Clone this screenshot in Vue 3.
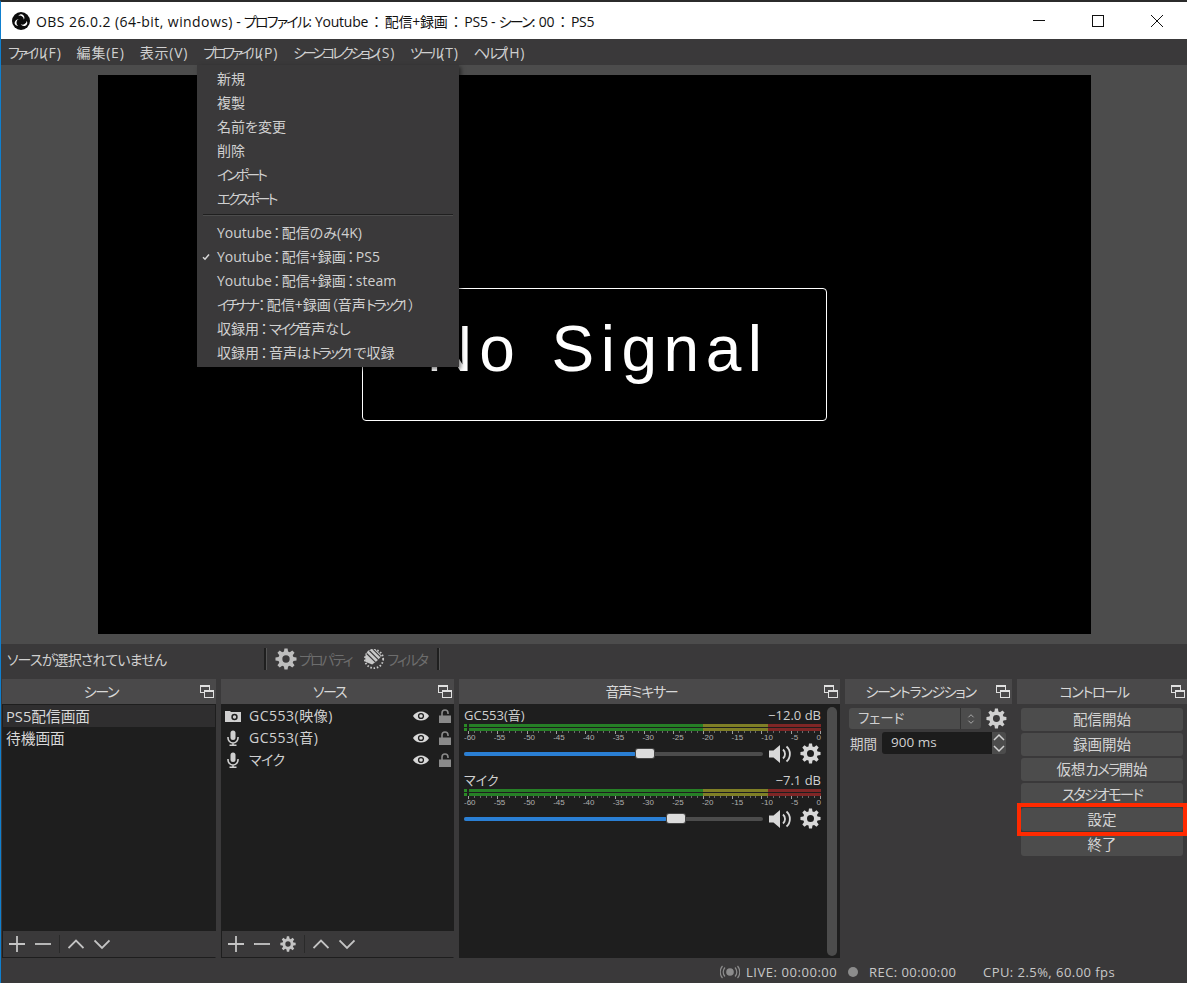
<template>
  <div class="window">
    <header class="titlebar">
      <svg class="logo" viewBox="0 0 20 20">
        <circle cx="10" cy="10" r="10" fill="#0c0c0c" />
        <g v-for="r in [0, 120, 240]" :key="r" :transform="`rotate(${r} 10 10)`">
          <path d="M7 4.600a3.300 3.300 0 0 1 5.600-1.100a4.300 4.300 0 0 1 .4 5.200a3.700 3.700 0 0 0-2-3.900a3.600 3.600 0 0 0-4 -.2z" fill="#fff" />
        </g>
      </svg>
      <span class="title-text">
        <span class="title-prefix">OBS 26.0.2 (64-bit, windows)</span>
        <span v-for="(s, i) in split(titleText)" :key="i" :class="s.cls">{{ s.t }}</span>
      </span>
      <div class="window-buttons">
        <svg viewBox="0 0 12 12"><path d="M0 5.500h12" /></svg>
        <svg viewBox="0 0 12 12"><rect x="0.500" y="0.500" width="11" height="11" /></svg>
        <svg viewBox="0 0 12 12"><path d="M0 0l12 12M12 0L0 12" /></svg>
      </div>
    </header>

    <nav class="menubar">
      <span v-for="m in menus" :key="m">
        <span v-for="(s, i) in split(m)" :key="i" :class="s.cls">{{ s.t }}</span>
      </span>
      <div class="dropdown">
        <div v-for="item in profileTop" :key="item" class="dd-item">
          <span v-for="(s, i) in split(item)" :key="i" :class="s.cls">{{ s.t }}</span>
        </div>
        <div class="dd-sep"></div>
        <div v-for="item in profiles" :key="item.label" class="dd-item">
          <svg v-if="item.checked" class="dd-check" viewBox="0 0 8 8"><path d="M1 4.200l2 2L7 1.500" /></svg>
          <span v-for="(s, i) in split(item.label)" :key="i" :class="s.cls">{{ s.t }}</span>
        </div>
      </div>
    </nav>

    <main class="preview-wrap">
      <div class="preview">
        <div class="no-signal"><span>No Signal</span></div>
      </div>
    </main>

    <div class="context-bar">
      <span class="context-label">ソースが選択されていません</span>
      <i class="ctx-sep"></i>
      <svg class="ctx-icon" viewBox="0 0 24 24"><path :d="gearPath" fill-rule="evenodd" fill="#bdbdbd" /></svg>
      <span class="ctx-disabled">プロパティ</span>
      <svg class="ctx-icon filter" viewBox="0 0 24 24">
        <circle cx="12" cy="12" r="10" fill="none" stroke="#c8c8c8" stroke-width="2" stroke-dasharray="1.700 1.900" />
        <path d="M2.500 9a9 9 0 0 1 11-7.500l7 7-5 5.500-5.500 4-7.500-3z" fill="#c8c8c8" />
        <path d="M7 3l10 10M4 6l9.500 9.500M11 1.500l8 8" stroke="#3a393a" stroke-width="1.200" />
      </svg>
      <span class="ctx-disabled">フィルタ</span>
      <i class="ctx-sep last"></i>
    </div>

    <section class="docks">
      <div class="dock">
        <div class="dock-head"><span>シーン</span><i class="float-icon"></i></div>
        <div class="dock-list">
          <div v-for="(s, i) in scenes" :key="s" class="scene-row" :class="{ selected: i === 0 }">{{ s }}</div>
        </div>
        <div class="toolbar">
          <svg viewBox="0 0 16 16"><path d="M8 0v16M0 8h16" /></svg>
          <svg viewBox="0 0 16 16"><path d="M0 8h16" /></svg>
          <i class="tool-sep"></i>
          <svg viewBox="0 0 16 16"><path d="M0.500 12L8 4.500l7.500 7.500" /></svg>
          <svg viewBox="0 0 16 16"><path d="M0.500 4.500L8 12l7.500-7.500" /></svg>
        </div>
      </div>

      <div class="dock">
        <div class="dock-head"><span>ソース</span><i class="float-icon"></i></div>
        <div class="dock-list source-list">
          <div v-for="s in sources" :key="s.name" class="source-row">
            <svg v-if="s.type === 'camera'" class="src-icon" viewBox="0 0 16 14">
              <path d="M0 2h5l1 1h10v10H0z" fill="#d0d0d0" />
              <circle cx="9.500" cy="8" r="3.200" fill="#1e1e1e" />
              <circle cx="9.500" cy="8" r="1.700" fill="#d0d0d0" />
            </svg>
            <svg v-else class="src-icon" viewBox="0 0 16 16">
              <rect x="5.500" y="0.500" width="5" height="9.500" rx="2.500" fill="#d0d0d0" />
              <path d="M3 7v1a5 5 0 0 0 10 0V7M8 13v2.200M4.500 15.300h7" fill="none" stroke="#d0d0d0" stroke-width="1.600" />
            </svg>
            <span class="src-name">
              <span v-for="(p, i) in split(s.name)" :key="i" :class="p.cls">{{ p.t }}</span>
            </span>
            <svg class="eye" viewBox="0 0 16 10">
              <path d="M0 5c3.500-6 12.500-6 16 0-3.500 6-12.500 6-16 0z" fill="#d8d8d8" />
              <circle cx="8" cy="5" r="3.100" fill="#1e1e1e" />
              <circle cx="8" cy="5" r="1.800" fill="#d8d8d8" />
            </svg>
            <svg class="lock" viewBox="0 0 12 14">
              <path d="M3 7V4a3 3 0 0 1 6 0v1" fill="none" stroke="#8a8a8a" stroke-width="1.600" />
              <rect x="0" y="6.500" width="12" height="7.500" fill="#8a8a8a" />
            </svg>
          </div>
        </div>
        <div class="toolbar">
          <svg viewBox="0 0 16 16"><path d="M8 0v16M0 8h16" /></svg>
          <svg viewBox="0 0 16 16"><path d="M0 8h16" /></svg>
          <svg viewBox="0 0 24 24" class="tool-gear"><path :d="gearPath" fill-rule="evenodd" /></svg>
          <i class="tool-sep"></i>
          <svg viewBox="0 0 16 16"><path d="M0.500 12L8 4.500l7.500 7.500" /></svg>
          <svg viewBox="0 0 16 16"><path d="M0.500 4.500L8 12l7.500-7.500" /></svg>
        </div>
      </div>

      <div class="dock">
        <div class="dock-head"><span>音声ミキサー</span><i class="float-icon"></i></div>
        <div class="mixer-body">
          <div class="mixer-channels">
            <div v-for="ch in channels" :key="ch.name" class="channel">
              <div class="ch-top"><span>{{ ch.name }}</span><span>{{ ch.level }}</span></div>
              <div class="meter">
                <div class="clip"><i></i><i></i></div>
                <div class="meter-bars"><i></i><i></i></div>
              </div>
              <div class="ticks"></div>
              <div class="tick-labels"><span v-for="t in tickLabels" :key="t">{{ t }}</span></div>
              <div class="ch-controls">
                <div class="slider">
                  <div class="slider-fill" :style="{ width: ch.volume + 'px' }"></div>
                </div>
                <svg class="speaker" viewBox="0 0 22 20">
                  <path d="M0 6.500h4.500L11 1v18l-6.500-5.500H0z" fill="#d8d8d8" />
                  <path d="M14 5.500a6 6 0 0 1 0 9M17.500 2.500a10 10 0 0 1 0 15" fill="none" stroke="#d8d8d8" stroke-width="1.800" />
                </svg>
                <svg class="mix-gear" viewBox="0 0 24 24"><path :d="gearPath" fill-rule="evenodd" fill="#d8d8d8" /></svg>
              </div>
            </div>
          </div>
          <div class="scrollbar"></div>
        </div>
      </div>

      <div class="dock plain">
        <div class="dock-head"><span>シーントランジション</span><i class="float-icon"></i></div>
        <div class="transition-body">
          <div class="combo-row">
            <div class="combo">
              <span class="combo-text">フェード</span>
              <svg class="combo-arrows" viewBox="0 0 8 14"><path d="M1 5l3-3 3 3M1 9l3 3 3-3" /></svg>
            </div>
            <svg class="trans-gear" viewBox="0 0 24 24"><path :d="gearPath" fill-rule="evenodd" fill="#d0d0d0" /></svg>
          </div>
          <div class="duration-row">
            <span>期間</span>
            <div class="spin-input">900 ms</div>
            <svg class="spin-arrows" viewBox="0 0 14 22"><path d="M2 8l5-5 5 5M2 14l5 5 5-5" /></svg>
          </div>
        </div>
      </div>

      <div class="dock plain">
        <div class="dock-head"><span>コントロール</span><i class="float-icon"></i></div>
        <div class="control-body">
          <button v-for="b in controls" :key="b" class="ctl-btn">
            <span v-for="(s, i) in split(b)" :key="i" :class="s.cls">{{ s.t }}</span>
          </button>
          <div class="highlight"></div>
        </div>
      </div>
    </section>

    <footer class="statusbar">
      <svg class="live-icon" viewBox="0 0 20 14">
        <circle cx="10" cy="7" r="3.800" fill="#8c8c8c" />
        <path d="M5 2.500a6.500 6.500 0 0 0 0 9M15 2.500a6.500 6.500 0 0 1 0 9M2.500 1a9 9 0 0 0 0 12M17.500 1a9 9 0 0 1 0 12" fill="none" stroke="#8c8c8c" stroke-width="1.200" />
      </svg>
      <span class="st-live">LIVE: 00:00:00</span>
      <i class="rec-dot"></i>
      <span class="st-rec">REC: 00:00:00</span>
      <span class="st-cpu">CPU: 2.5%, 60.00 fps</span>
    </footer>
  </div>
</template>

<script setup>
const titleText = " - プロファイル: Youtube：配信+録画：PS5 - シーン: 00：PS5";
const menus = ["ファイル(F)", "編集(E)", "表示(V)", "プロファイル(P)", "シーンコレクション(S)", "ツール(T)", "ヘルプ(H)"];
const profileTop = ["新規", "複製", "名前を変更", "削除", "インポート", "エクスポート"];
const profiles = [
  { label: "Youtube：配信のみ(4K)" },
  { label: "Youtube：配信+録画：PS5", checked: true },
  { label: "Youtube：配信+録画：steam" },
  { label: "イチナナ：配信+録画（音声トラック1）" },
  { label: "収録用：マイク音声なし" },
  { label: "収録用：音声はトラック1で収録" },
];
const scenes = ["PS5配信画面", "待機画面"];
const sources = [
  { name: "GC553(映像)", type: "camera" },
  { name: "GC553(音)", type: "mic" },
  { name: "マイク", type: "mic" },
];
const channels = [
  { name: "GC553(音)", level: "−12.0 dB", volume: 172 },
  { name: "マイク", level: "−7.1 dB", volume: 203 },
];
const tickLabels = [-60, -55, -50, -45, -40, -35, -30, -25, -20, -15, -10, -5, 0];
const controls = ["配信開始", "録画開始", "仮想カメラ開始", "スタジオモード", "設定", "終了"];

// カタカナと全角コロンは元の画面だと字幅が違うので分けて詰める
const split = (text) =>
  text
    .split(/([ァ-ヶー]+|：)/)
    .filter(Boolean)
    .map((t) => ({ t, cls: t === "：" ? "colon" : /^[ァ-ヶー]/.test(t) ? "kana" : "" }));

// 8歯の歯車アイコンを計算で作る
const makeGear = () => {
  const pts = [];
  for (let i = 0; i < 8; i++) {
    const a = (i * Math.PI) / 4;
    const spots = [
      [-0.27, 8.4],
      [-0.15, 11.6],
      [0.15, 11.6],
      [0.27, 8.4],
    ];
    for (const [d, r] of spots) {
      pts.push(`${(12 + r * Math.sin(a + d)).toFixed(2)} ${(12 - r * Math.cos(a + d)).toFixed(2)}`);
    }
  }
  return `M${pts.join("L")}Z M12 8a4 4 0 1 0 0 8a4 4 0 1 0 0-8Z`;
};
const gearPath = makeGear();
</script>

<style>
html,
body {
  margin: 0;
  background: #3a393a;
}
</style>

<style scoped>
.window {
  width: 1187px;
  height: 983px;
  display: flex;
  flex-direction: column;
  overflow: hidden;
  background: #3a393a;
  color: #d0d0d0;
  font-family: "Open Sans", "Noto Sans CJK JP", sans-serif;
  font-size: 14px;
  font-feature-settings: "palt";
  box-sizing: border-box;
  border-top: 2px solid #2b2b2b;
  border-left: 1px solid #0f7fce;
}
.kana {
  letter-spacing: var(--kana, 0);
}
.colon {
  padding: 0 var(--colon, 0);
}

.titlebar {
  --kana: -1.800px;
  --colon: 5px;
  height: 37px;
  flex: none;
  display: flex;
  align-items: center;
  background: #fff;
  color: #111;
  font-size: 14px;
  padding-left: 11px;
}
.logo {
  width: 18px;
  height: 18px;
  margin-right: 6px;
}
.title-text {
  white-space: pre;
  letter-spacing: -0.25px;
}
.title-prefix {
  letter-spacing: 0.430px;
}
.window-buttons {
  margin-left: auto;
  display: flex;
  gap: 47px;
  padding-right: 24px;
}
.window-buttons svg {
  width: 12px;
  height: 12px;
  fill: none;
  stroke: #111;
  stroke-width: 1;
}

.menubar {
  --kana: -3.200px;
  height: 26px;
  flex: none;
  display: flex;
  align-items: center;
  gap: 15px;
  padding-left: 7px;
  position: relative;
  font-size: 14px;
  letter-spacing: 0.800px;
}
.dropdown {
  --kana: -3px;
  --colon: 1.500px;
  position: absolute;
  left: 196px;
  top: 26px;
  width: 262px;
  height: 302px;
  box-sizing: border-box;
  padding-top: 2px;
  background: #3a393a;
  box-shadow: 2px 2px 4px rgba(0, 0, 0, 0.5);
  z-index: 5;
  font-size: 14px;
  letter-spacing: 0;
}
.dd-item {
  position: relative;
  height: 24px;
  line-height: 24px;
  padding-left: 20px;
  white-space: nowrap;
}
.dd-check {
  position: absolute;
  left: 5px;
  top: 8px;
  width: 8px;
  height: 8px;
  fill: none;
  stroke: #d8d8d8;
  stroke-width: 1.500;
}
.dd-sep {
  height: 1px;
  margin: 3px 6px 5px 6px;
  background: #1f1f1f;
  border-bottom: 1px solid #4c4c4c;
}

.preview-wrap {
  height: 579px;
  flex: none;
  box-sizing: border-box;
  padding: 10px 96px 10px 97px;
  background: #4c4c4c;
}
.preview {
  width: 993px;
  height: 559px;
  background: #000;
  display: flex;
  align-items: center;
  justify-content: center;
}
.no-signal {
  width: 465px;
  height: 133px;
  box-sizing: border-box;
  border: 1.500px solid #fff;
  border-radius: 4px;
  padding: 0 0 12px 6px;
  display: flex;
  align-items: center;
  justify-content: center;
  color: #fff;
  font-family: "Liberation Sans", sans-serif;
  font-size: 64px;
  letter-spacing: 6.500px;
  word-spacing: 6px;
}

.context-bar {
  height: 35px;
  flex: none;
  display: flex;
  align-items: center;
  padding: 0 0 5px 6px;
  box-sizing: border-box;
  font-size: 14px;
}
.context-label {
  width: 257px;
  white-space: nowrap;
  letter-spacing: -0.850px;
}
.ctx-sep {
  width: 2px;
  height: 22px;
  background: #1f1f1f;
  border-right: 1px solid #555;
  margin-right: 8px;
}
.ctx-sep.last {
  margin-left: 10px;
}
.ctx-icon {
  width: 22px;
  height: 22px;
}
.ctx-icon.filter {
  margin-left: 12px;
}
.ctx-disabled {
  color: #6d6d6d;
  margin-left: 2px;
  white-space: nowrap;
  letter-spacing: -2px;
}

.docks {
  flex: none;
  height: 279px;
  display: grid;
  grid-template-columns: 214px 233px 381px 167px 170px;
  gap: 5px;
  margin-left: 1px;
}
.dock {
  display: flex;
  flex-direction: column;
  min-width: 0;
  height: 279px;
}
.dock-head {
  height: 25px;
  flex: none;
  display: flex;
  align-items: center;
  background: #4a494a;
  padding-right: 2px;
  color: #d8d8d8;
  font-size: 14px;
  letter-spacing: -1.300px;
}
.dock-head span {
  flex: 1;
  text-align: center;
  white-space: nowrap;
  margin-top: -2px;
}
.float-icon {
  width: 14px;
  height: 13px;
  flex: none;
  position: relative;
}
.float-icon::before,
.float-icon::after {
  content: "";
  position: absolute;
  box-sizing: border-box;
  width: 10px;
  height: 8px;
  border: 1px solid #e0e0e0;
  border-top-width: 2px;
}
.float-icon::before {
  left: 0;
  top: 0;
}
.float-icon::after {
  right: 0;
  bottom: 0;
  background: #4a494a;
}
.dock-list {
  flex: 1;
  background: #1e1e1e;
  padding-top: 1px;
  box-sizing: border-box;
  font-size: 14.700px;
  min-height: 0;
}
.scene-row {
  height: 22px;
  line-height: 22px;
  padding-left: 4px;
  color: #d8d8d8;
}
.scene-row.selected {
  background: #2f2e2f;
  margin: 0 1px;
  padding-left: 3px;
}
.source-row {
  height: 22px;
  display: flex;
  align-items: center;
  padding-left: 4px;
}
.src-icon {
  width: 16px;
  height: 16px;
  margin-right: 8px;
}
.src-name {
  --kana: -0.600px;
  flex: 1;
  white-space: nowrap;
  font-size: 14px;
  letter-spacing: 0.500px;
  margin-top: -2px;
}
.eye {
  width: 16px;
  height: 10px;
  margin-right: 10px;
}
.lock {
  width: 12px;
  height: 14px;
  margin-right: 3px;
}
.toolbar {
  height: 27px;
  flex: none;
  display: flex;
  align-items: center;
  gap: 10px;
  padding-left: 6px;
  box-sizing: border-box;
  border: 1px solid #1e1e1e;
  border-top: 0;
  border-right-color: #3a393a;
}
.toolbar svg {
  width: 16px;
  height: 16px;
  fill: none;
  stroke: #c4c4c4;
  stroke-width: 1.800;
}
.toolbar .tool-gear {
  fill: #c4c4c4;
  stroke: none;
}
.tool-sep {
  width: 1px;
  height: 18px;
  background: #2a2a2a;
  margin-right: -2px;
  margin-left: -2px;
}

.mixer-body {
  flex: 1;
  display: flex;
  background: #1e1e1e;
  min-height: 0;
}
.mixer-channels {
  width: 368px;
  flex: none;
}
.channel {
  height: 65px;
  box-sizing: border-box;
  padding-left: 5px;
  padding-top: 3px;
}
.ch-top {
  display: flex;
  justify-content: space-between;
  height: 16px;
  line-height: 16px;
  font-size: 13px;
  width: 357px;
}
.meter {
  display: flex;
  gap: 2px;
  width: 357px;
  height: 7px;
  margin-top: 1px;
}
.clip {
  width: 3px;
  display: flex;
  flex-direction: column;
  justify-content: space-between;
}
.clip i {
  height: 3px;
  background: #2a8a26;
}
.meter-bars {
  flex: 1;
  display: flex;
  flex-direction: column;
  justify-content: space-between;
}
.meter-bars i {
  height: 3px;
  background: linear-gradient(
    90deg,
    #267f26 0,
    #267f26 234px,
    #7f7f26 234px,
    #7f7f26 299px,
    #7f2626 299px
  );
}
.ticks {
  height: 3px;
  width: 353px;
  margin-left: 4px;
  background:
    repeating-linear-gradient(90deg, #a0a0a0 0, #a0a0a0 1px, transparent 1px, transparent 29.330px),
    repeating-linear-gradient(90deg, #6a6a6a 0, #6a6a6a 1px, transparent 1px, transparent 5.867px) 0 0 / 100% 2px no-repeat;
}
.tick-labels {
  display: flex;
  justify-content: space-between;
  width: 357px;
  font-family: "Liberation Sans", sans-serif;
  font-size: 8px;
  line-height: 8px;
  color: #b0b0b0;
}
.ch-controls {
  display: flex;
  align-items: center;
  height: 27px;
  margin-top: -2px;
}
.slider {
  position: relative;
  width: 299px;
  height: 4px;
  background: #4c4c4c;
  border-radius: 2px;
  margin-right: 6px;
}
.slider-fill {
  height: 4px;
  background: #2a7fd4;
  border-radius: 2px;
  position: relative;
}
.slider-fill::after {
  content: "";
  position: absolute;
  right: -18px;
  top: -3px;
  width: 18px;
  height: 9px;
  background: #dcdcdc;
  border-radius: 2px;
  box-shadow: 0 0 0 1px #444;
}
.speaker {
  width: 22px;
  height: 20px;
  margin-right: 9px;
}
.mix-gear {
  width: 21px;
  height: 21px;
}
.scrollbar {
  width: 10px;
  margin: 3px 0 2px 0;
  background: #4c4c4c;
  border-radius: 5px;
}

.transition-body {
  padding: 4px 5px 0 4px;
  font-size: 13.500px;
}
.combo-row {
  display: flex;
  align-items: center;
  gap: 5px;
}
.combo {
  width: 133px;
  height: 21px;
  box-sizing: border-box;
  display: flex;
  align-items: center;
  background: #4c4c4c;
  border-radius: 3px;
}
.combo-text {
  flex: 1;
  padding-left: 9px;
  border-right: 1px solid #333;
  height: 21px;
  line-height: 20px;
}
.combo-arrows {
  width: 20px;
  height: 12px;
  fill: none;
  stroke: #b8b8b8;
}
.trans-gear {
  width: 21px;
  height: 21px;
}
.duration-row {
  display: flex;
  align-items: center;
  margin-top: 3px;
  padding-left: 1px;
}
.spin-input {
  width: 110px;
  height: 22px;
  line-height: 21px;
  box-sizing: border-box;
  margin-left: 5px;
  padding-left: 9px;
  background: #1c1c1c;
  border-radius: 3px 0 0 3px;
}
.spin-arrows {
  width: 14px;
  height: 22px;
  background: #4c4c4c;
  border-radius: 0 3px 3px 0;
  fill: none;
  stroke: #d0d0d0;
  stroke-width: 1.500;
}

.control-body {
  --kana: -1.800px;
  position: relative;
  padding: 4px 4px 0 4px;
  display: flex;
  flex-direction: column;
  gap: 2px;
}
.ctl-btn {
  height: 23px;
  flex: none;
  border: 0;
  padding: 0;
  background: #4c4c4c;
  border-radius: 3px;
  color: #d4d4d4;
  font: inherit;
  font-size: 14.500px;
  line-height: 22px;
}
.highlight {
  position: absolute;
  left: 0;
  top: 99px;
  width: 170px;
  height: 33px;
  box-sizing: border-box;
  border: 4px solid #ff2a00;
  pointer-events: none;
}

.statusbar {
  height: 25px;
  flex: none;
  display: flex;
  align-items: center;
  font-size: 13px;
  letter-spacing: 0.450px;
  padding: 2px 0 0 719px;
  box-sizing: border-box;
  color: #c8c8c8;
  white-space: nowrap;
}
.live-icon {
  width: 20px;
  height: 14px;
  margin-right: 6px;
}
.st-live {
  width: 102px;
  letter-spacing: 0.550px;
}
.rec-dot {
  width: 10px;
  height: 10px;
  border-radius: 50%;
  background: #8c8c8c;
  margin-right: 11px;
}
.st-rec {
  width: 114px;
}
</style>
